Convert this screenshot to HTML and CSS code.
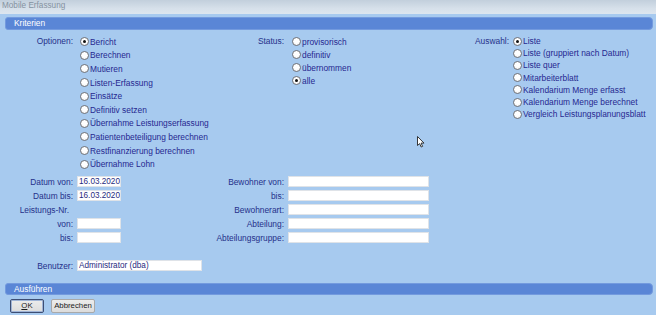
FILE: index.html
```html
<!DOCTYPE html>
<html lang="de">
<head>
<meta charset="utf-8">
<title>Mobile Erfassung</title>
<link rel="stylesheet" href="styles.css">
</head>
<body>
<div class="window">
  <div class="titlebar">Mobile Erfassung</div>
  <div class="content">
    <div class="section-bar">Kriterien</div>

    <div class="options">
      <div class="opt-label label-a">Optionen:</div>
      <div class="radio-list list-a">
        <div class="radio-item"><span class="radio checked"></span>Bericht</div>
        <div class="radio-item"><span class="radio"></span>Berechnen</div>
        <div class="radio-item"><span class="radio"></span>Mutieren</div>
        <div class="radio-item"><span class="radio"></span>Listen-Erfassung</div>
        <div class="radio-item"><span class="radio"></span>Einsätze</div>
        <div class="radio-item"><span class="radio"></span>Definitiv setzen</div>
        <div class="radio-item"><span class="radio"></span>Übernahme Leistungserfassung</div>
        <div class="radio-item"><span class="radio"></span>Patientenbeteiligung berechnen</div>
        <div class="radio-item"><span class="radio"></span>Restfinanzierung berechnen</div>
        <div class="radio-item"><span class="radio"></span>Übernahme Lohn</div>
      </div>

      <div class="opt-label label-b">Status:</div>
      <div class="radio-list list-b">
        <div class="radio-item"><span class="radio"></span>provisorisch</div>
        <div class="radio-item"><span class="radio"></span>definitiv</div>
        <div class="radio-item"><span class="radio"></span>übernommen</div>
        <div class="radio-item"><span class="radio checked"></span>alle</div>
      </div>

      <div class="opt-label label-c">Auswahl:</div>
      <div class="radio-list list-c">
        <div class="radio-item"><span class="radio checked"></span>Liste</div>
        <div class="radio-item"><span class="radio"></span>Liste (gruppiert nach Datum)</div>
        <div class="radio-item"><span class="radio"></span>Liste quer</div>
        <div class="radio-item"><span class="radio"></span>Mitarbeiterblatt</div>
        <div class="radio-item"><span class="radio"></span>Kalendarium Menge erfasst</div>
        <div class="radio-item"><span class="radio"></span>Kalendarium Menge berechnet</div>
        <div class="radio-item"><span class="radio"></span>Vergleich Leistungsplanungsblatt</div>
      </div>
    </div>

    <div class="fields">
      <div class="f-label">Datum von:</div>
      <div class="f-cell"><input class="field short" type="text" value="16.03.2020"></div>
      <div class="f-label">Bewohner von:</div>
      <div class="f-cell"><input class="field long" type="text" value=""></div>

      <div class="f-label">Datum bis:</div>
      <div class="f-cell"><input class="field short" type="text" value="16.03.2020"></div>
      <div class="f-label">bis:</div>
      <div class="f-cell"><input class="field long" type="text" value=""></div>

      <div class="f-label f-label-group">Leistungs-Nr.</div>
      <div class="f-cell"></div>
      <div class="f-label">Bewohnerart:</div>
      <div class="f-cell"><input class="field long" type="text" value=""></div>

      <div class="f-label">von:</div>
      <div class="f-cell"><input class="field short" type="text" value=""></div>
      <div class="f-label">Abteilung:</div>
      <div class="f-cell"><input class="field long" type="text" value=""></div>

      <div class="f-label">bis:</div>
      <div class="f-cell"><input class="field short" type="text" value=""></div>
      <div class="f-label">Abteilungsgruppe:</div>
      <div class="f-cell"><input class="field long" type="text" value=""></div>
    </div>

    <div class="user-row">
      <div class="f-label">Benutzer:</div>
      <input class="field user" type="text" value="Administrator (dba)">
    </div>

    <div class="section-bar section-run">Ausführen</div>

    <div class="buttons">
      <button class="btn btn-ok" type="button"><span class="accel">O</span>K</button>
      <button class="btn btn-cancel" type="button">Abbrechen</button>
    </div>
  </div>

  <svg class="cursor" width="8" height="12" viewBox="0 0 8 12" aria-hidden="true">
    <path d="M0.5 0.5 L0.5 9.5 L2.6 7.6 L4.2 11 L5.6 10.4 L4.1 7.1 L7 7.1 Z" fill="#ffffff" stroke="#222222" stroke-width="0.9" stroke-linejoin="round"/>
  </svg>
</div>
</body>
</html>
```

FILE: styles.css
```css
* {
  box-sizing: border-box;
}

html, body {
  margin: 0;
  padding: 0;
  background: #a7caef;
}

body {
  font-family: "Liberation Sans", Arial, sans-serif;
  font-size: 8.4px;
  color: #25308a;
}

.window {
  position: relative;
  width: 656px;
  height: 315px;
  overflow: hidden;
  background: #a7caef;
}

.titlebar {
  height: 14px;
  line-height: 12px;
  padding-left: 2px;
  font-size: 8.2px;
  color: #8592a1;
  background: linear-gradient(#c2cfdc, #d6e0ea 60%, #dde6ef);
}

.content {
  display: flex;
  flex-direction: column;
}

.section-bar {
  margin: 3px 3px 0 5px;
  height: 13px;
  line-height: 11px;
  padding-left: 8px;
  color: #ffffff;
  background: #5a86d6;
  border: 1px solid #739ade;
  border-radius: 3px 4px 4px 3px;
}

/* ---------- options ---------- */
.options {
  display: grid;
  grid-template-columns: 79px 146px 66px 159px 63px 1fr;
  align-items: start;
  margin-top: 5px;
}

.opt-label {
  text-align: right;
  white-space: nowrap;
}

.label-a { padding-right: 6px; line-height: 13.6px; }
.label-b { padding-right: 7px; line-height: 13px; }
.label-c { padding-right: 4px; line-height: 12.2px; }

.radio-list {
  display: flex;
  flex-direction: column;
}

.list-a .radio-item { height: 13.6px; }
.list-b .radio-item { height: 13px; }
.list-c .radio-item { height: 12.2px; }

.list-a { padding-left: 1px; }
.list-b { padding-left: 1px; }

.radio-item {
  display: flex;
  align-items: center;
  white-space: nowrap;
  color: #262890;
}

.radio {
  position: relative;
  flex: none;
  width: 9px;
  height: 9px;
  margin-right: 1px;
  border: 1px solid #727378;
  border-radius: 50%;
  background: radial-gradient(circle at 50% 40%, #ffffff 40%, #e9e9e9 100%);
}

.radio.checked::after {
  content: "";
  position: absolute;
  left: 2px;
  top: 2px;
  width: 3px;
  height: 3px;
  border-radius: 50%;
  background: #111111;
}

/* ---------- fields ---------- */
.fields {
  display: grid;
  grid-template-columns: 77px 130px 81px 1fr;
  grid-auto-rows: 14px;
  align-items: center;
  margin-top: 4px;
}

.f-label {
  text-align: right;
  padding-right: 4px;
  white-space: nowrap;
  color: #25308a;
}

.f-label-group {
  padding-right: 8px;
}

.f-cell {
  display: flex;
  align-items: center;
}

.field {
  display: block;
  height: 11px;
  margin: 0;
  padding: 0 0 0 1px;
  border: 1px solid #dfe3e8;
  background: #ffffff;
  font-family: "Liberation Sans", Arial, sans-serif;
  font-size: 8.2px;
  line-height: 9px;
  color: #1f2a80;
  outline: none;
}

.field.short { width: 44px; }
.field.long { width: 141px; }
.field.user { width: 125px; }

.user-row {
  display: grid;
  grid-template-columns: 77px auto;
  align-items: center;
  height: 14px;
  margin-top: 14px;
}

.section-run {
  margin-top: 10px;
  height: 12.5px;
}

/* ---------- buttons ---------- */
.buttons {
  display: flex;
  gap: 7px;
  padding-left: 10px;
  margin-top: 4px;
  align-items: center;
}

.btn {
  height: 14px;
  margin: 0;
  padding: 0;
  font-family: "Liberation Sans", Arial, sans-serif;
  font-size: 7.8px;
  line-height: 12px;
  color: #1b1b1b;
  background: linear-gradient(#ececec, #dcdcdc);
  border: 1px solid #a9a9a9;
  border-radius: 2px;
}

.btn-ok {
  width: 34px;
  border: 1px solid #3d4e74;
  box-shadow: inset 0 0 0 1px #9fb4d6;
}

.btn-cancel {
  width: 44px;
}

.accel {
  text-decoration: underline;
}

.cursor {
  position: absolute;
  left: 417px;
  top: 136px;
}
```
